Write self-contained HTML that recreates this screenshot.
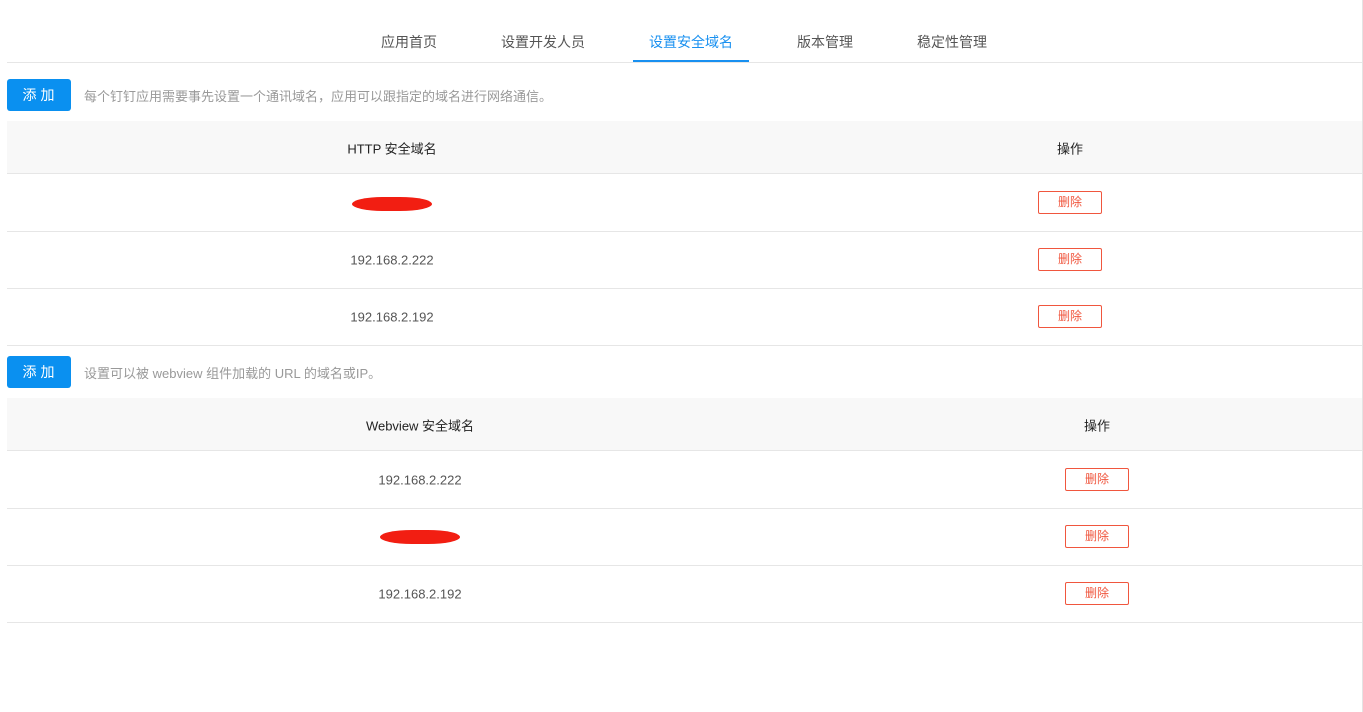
<!DOCTYPE html>
<html><head><meta charset="utf-8"><style>
*{margin:0;padding:0;box-sizing:border-box}
body{width:1363px;height:712px;background:#fff;font-family:"Liberation Sans","Noto Sans CJK SC",sans-serif;position:relative;overflow:hidden;font-size:13px}
.vl{position:absolute;left:1362px;top:0;width:1px;height:712px;background:#e4e4e4}
.tab{position:absolute;top:32px;font-size:14px;color:#555;transform:translateX(-50%);white-space:nowrap}
.hl{position:absolute;left:7px;width:1355px;height:1px;background:#e6e6e6}
.btn{position:absolute;left:7px;width:64px;height:32px;background:#0a90f0;color:#fff;border-radius:3px;font-size:14px;text-align:center;line-height:32px;letter-spacing:4px;padding-left:3px}
.tip{position:absolute;left:84px;color:#999;font-size:13px}
.thead{position:absolute;left:7px;width:1355px;height:53px;background:#f8f8f8;border-bottom:1px solid #e6e6e6}
.t{position:absolute;transform:translate(-50%,-50%);white-space:nowrap;color:#555}
.th{color:#222;font-size:13px}
.del{position:absolute;width:64px;height:23px;border:1px solid #f0563e;border-radius:2px;color:#f0563e;font-size:12px;text-align:center;line-height:21px}
.red{position:absolute;width:80px;height:14px;background:#f21e12;border-radius:40%/50%}
</style></head><body>
<div class="vl"></div>
<div class="tab" style="left:409px">应用首页</div>
<div class="tab" style="left:543px">设置开发人员</div>
<div class="tab" style="left:691px;color:#1890f0">设置安全域名</div>
<div class="tab" style="left:825px">版本管理</div>
<div class="tab" style="left:952px">稳定性管理</div>
<div class="hl" style="top:62px"></div>
<div style="position:absolute;left:633px;top:60px;width:116px;height:2px;background:#1890f0"></div>

<div class="btn" style="top:79px">添加</div>
<div class="tip" style="top:86px">每个钉钉应用需要事先设置一个通讯域名，应用可以跟指定的域名进行网络通信。</div>
<div class="thead" style="top:121px"></div>
<div class="t th" style="left:392px;top:148px">HTTP 安全域名</div>
<div class="t th" style="left:1070px;top:148px">操作</div>
<div class="red" style="left:352px;top:197px"></div>
<div class="hl" style="top:231px"></div>
<div class="t" style="left:392px;top:260px">192.168.2.222</div>
<div class="hl" style="top:288px"></div>
<div class="t" style="left:392px;top:317px">192.168.2.192</div>
<div class="hl" style="top:345px"></div>
<div class="del" style="left:1038px;top:191px">删除</div>
<div class="del" style="left:1038px;top:248px">删除</div>
<div class="del" style="left:1038px;top:305px">删除</div>

<div class="btn" style="top:356px">添加</div>
<div class="tip" style="top:363px">设置可以被 webview 组件加载的 URL 的域名或IP。</div>
<div class="thead" style="top:398px"></div>
<div class="t th" style="left:420px;top:425px">Webview 安全域名</div>
<div class="t th" style="left:1097px;top:425px">操作</div>
<div class="t" style="left:420px;top:480px">192.168.2.222</div>
<div class="hl" style="top:508px"></div>
<div class="red" style="left:380px;top:530px"></div>
<div class="hl" style="top:565px"></div>
<div class="t" style="left:420px;top:594px">192.168.2.192</div>
<div class="hl" style="top:622px"></div>
<div class="del" style="left:1065px;top:468px">删除</div>
<div class="del" style="left:1065px;top:525px">删除</div>
<div class="del" style="left:1065px;top:582px">删除</div>
</body></html>
